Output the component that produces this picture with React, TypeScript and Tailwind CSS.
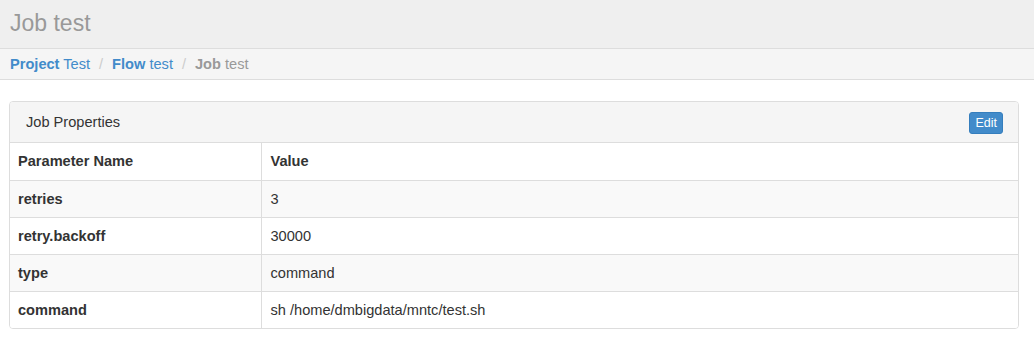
export default function App() {
  const rows = [
    { name: "retries", value: "3" },
    { name: "retry.backoff", value: "30000" },
    { name: "type", value: "command" },
    { name: "command", value: "sh /home/dmbigdata/mntc/test.sh" },
  ];
  return (
    <div className="w-[1034px] h-[338px] bg-white text-[14.6px] text-[#333] font-['Liberation_Sans',Arial,sans-serif]">
      <div className="h-[49px] bg-[#efefef] border-b border-[#ddd] pl-[10px] pt-[9px]">
        <h1 className="text-[23px] leading-[28px] text-[#999]">Job test</h1>
      </div>
      <div className="h-[31px] bg-[#f5f5f5] border-b border-[#ddd] pl-[10px] pt-[1px] flex items-center gap-[9px]">
        <a className="text-[#428bca]">
          <b>Project</b> Test
        </a>
        <span className="text-[#ccc]">/</span>
        <a className="text-[#428bca]">
          <b>Flow</b> test
        </a>
        <span className="text-[#ccc]">/</span>
        <span className="text-[#999]">
          <b>Job</b> test
        </span>
      </div>
      <div className="pt-[21px] pl-[9px] pr-[15px]">
        <div className="border border-[#ddd] rounded-[4px] overflow-hidden">
          <div className="h-[41px] bg-[#f5f5f5] border-b border-[#ddd] flex items-center justify-between pl-[16px] pr-[15px] pt-[2px]">
            <span>Job Properties</span>
            <button className="h-[22px] px-[5px] bg-[#428bca] border border-[#357ebd] rounded-[3px] text-white text-[12.5px] leading-[18px]">
              Edit
            </button>
          </div>
          <table className="w-full border-collapse">
            <thead>
              <tr className="h-[37px]">
                <th className="w-[251px] text-left pl-[8px] pt-[2px] font-bold border-r border-[#ddd]">Parameter Name</th>
                <th className="text-left pl-[9px] pt-[2px] font-bold">Value</th>
              </tr>
            </thead>
            <tbody>
              {rows.map((r, i) => (
                <tr key={r.name} className={"h-[37px] border-t border-[#ddd] " + (i % 2 === 0 ? "bg-[#f9f9f9]" : "bg-white")}>
                  <td className="pl-[8px] pt-[2px] font-bold border-r border-[#ddd]">{r.name}</td>
                  <td className="pl-[9px] pt-[2px]">{r.value}</td>
                </tr>
              ))}
            </tbody>
          </table>
        </div>
      </div>
    </div>
  );
}
